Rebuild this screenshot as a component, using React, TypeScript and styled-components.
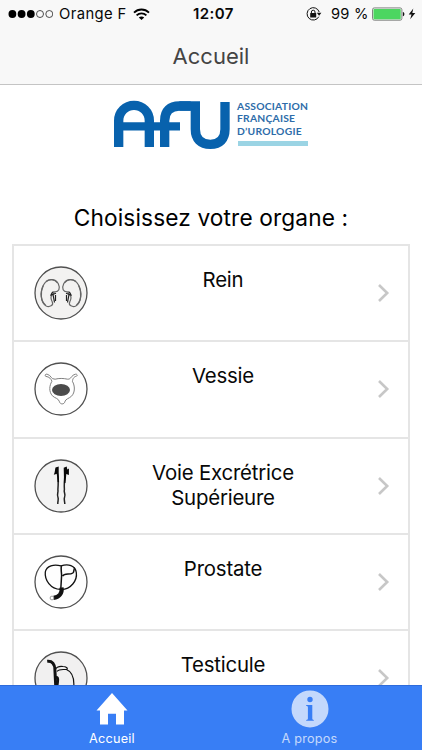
import React from "react";
import styled, { createGlobalStyle } from "styled-components";

const GlobalStyle = createGlobalStyle`
  * { box-sizing: border-box; }
  body { margin: 0; background: #fff; overflow: hidden; }
  svg { display: block; flex: none; }
`;

const Screen = styled.div`
  width: 422px;
  height: 750px;
  display: flex;
  flex-direction: column;
  overflow: hidden;
  background: #fff;
  color: #080808;
  font-family: Inter, "Liberation Sans", sans-serif;
`;

const Header = styled.header`
  flex: none;
  height: 85px;
  background: #f8f8f8;
  border-bottom: 1px solid #c4c4c4;
`;

const StatusBar = styled.div`
  height: 28px;
  display: grid;
  grid-template-columns: 193px 1fr 116px;
  align-items: center;
  line-height: 28px;
  font-size: 15px;
  white-space: nowrap;
`;

const Carrier = styled.div`
  display: flex;
  align-items: center;
  padding-left: 8px;
`;

const CarrierName = styled.span`
  width: 80px;
  padding-left: 6px;
  font-size: 14.8px;
  letter-spacing: 0.4px;
`;

const Clock = styled.div`
  font-weight: 600;
  font-size: 15px;
  letter-spacing: 0.45px;
`;

const Power = styled.div`
  display: flex;
  align-items: center;
`;

const Percent = styled.span`
  width: 41px;
  margin-left: 9px;
  font-size: 14.7px;
  letter-spacing: 0.2px;
`;

const Title = styled.h1`
  margin: 0;
  height: 56px;
  line-height: 56px;
  text-align: center;
  font-size: 22px;
  font-weight: 400;
  letter-spacing: 0;
  color: #444;
`;

const Content = styled.main`
  flex: 1;
  min-height: 0;
  overflow: hidden;
  display: flex;
  flex-direction: column;
`;

const Brand = styled.div`
  flex: none;
  display: flex;
  height: 117px;
  padding: 15px 0 0 113px;
`;

const BrandText = styled.div`
  margin-left: 7px;
  font-family: Lato, sans-serif;
  font-weight: 700;
  color: #2d6ca9;
  white-space: nowrap;
`;

const BrandLine = styled.div`
  height: 12.4px;
  line-height: 12px;
  font-size: 10.3px;
  letter-spacing: 0.24px;
`;

const BrandRule = styled.div`
  width: 70px;
  height: 5px;
  margin: 4px 0 0 1px;
  background: #9bd4e4;
`;

const Heading = styled.h2`
  flex: none;
  margin: 0;
  height: 42px;
  line-height: 32px;
  text-align: center;
  font-size: 22.7px;
  font-weight: 400;
  letter-spacing: 0.12px;
  color: #000;
`;

const List = styled.div`
  flex: none;
  width: 398px;
  margin-left: 12px;
  border: 2px solid #e5e5e5;
`;

const Row = styled.div`
  height: 96.3px;
  display: grid;
  grid-template-columns: 20px 54px 270px 1fr;
  border-bottom: 2px solid #e5e5e5;
`;

const Badge = styled.div`
  grid-column: 2;
  padding-top: 20px;
`;

const Label = styled.div`
  padding: 21px 30px 0;
  text-align: center;
  font-size: 20.4px;
  line-height: 25px;
  letter-spacing: -0.2px;
`;

const Chevron = styled.div`
  padding: 37px 0 0 19px;
`;

const TabBar = styled.nav`
  flex: none;
  height: 65px;
  display: grid;
  grid-template-columns: 224px 171px;
  background: #387ef5;
  border-top: 1px solid #2e6bdb;
`;

const Tab = styled.div<{ $active?: boolean }>`
  display: flex;
  flex-direction: column;
  align-items: center;
  color: #fff;
  opacity: ${(p) => (p.$active ? 1 : 0.7)};
  padding-top: 4px;
`;

const TabLabel = styled.span`
  margin-top: 1px;
  font-size: 12.7px;
  line-height: 20px;
  letter-spacing: 0.22px;
`;

const SignalDots = () => (
  <svg width="45" height="10" viewBox="0 0 45 10">
    {[4.4, 13.6, 22.8].map((x) => (
      <circle key={x} cx={x} cy="5" r="3.9" fill="#000" />
    ))}
    {[32, 41.3].map((x) => (
      <circle key={x} cx={x} cy="5" r="3.5" fill="none" stroke="#222" strokeWidth=".8" />
    ))}
  </svg>
);

const Wifi = () => (
  <svg width="17" height="13" viewBox="0 0 17 13" fill="none" stroke="#000" strokeWidth="1.8">
    <path d="M1 4.7C5.2.4 11.8.4 16 4.7M3.6 7.4c2.8-2.8 7-2.8 9.8 0" />
    <path d="M8.5 12.1 5.8 9.5c1.5-1.4 3.9-1.4 5.4 0z" fill="#000" stroke="none" />
  </svg>
);

const RotationLock = () => (
  <svg width="16" height="14" viewBox="0 0 16 14">
    <path d="M12.8 9.7A6.2 6.2 0 1 1 13.2 5" fill="none" stroke="#111" strokeWidth="1" />
    <path d="M10.8 5.7h4.6l-2.3 3z" fill="#111" />
    <rect x="4.2" y="6.1" width="6" height="4.3" rx=".5" fill="#111" />
    <path d="M5.4 6.3V5a1.8 1.8 0 0 1 3.6 0v1.3" fill="none" stroke="#111" strokeWidth="1" />
  </svg>
);

const Battery = () => (
  <svg width="45" height="14" viewBox="0 0 45 14">
    <rect x=".5" y=".9" width="29.4" height="12.3" rx="1.8" fill="#e8f5e9" stroke="#777" strokeWidth=".9" />
    <rect x="1.5" y="1.9" width="27.2" height="10.3" rx=".8" fill="#4cd660" />
    <path d="M30.9 5c2 .5 2 3.700 0 4.200z" fill="#111" />
    <path d="M41.300 1.500 36.700 7.600h2.800l-1.300 4.700 5.100-6.300h-3z" fill="#111" />
  </svg>
);

const AfuLogo = () => (
  <svg width="117" height="52" viewBox="24 30 351 156" fill="none" stroke="#0862ad" strokeWidth="28">
    <path d="M41 171V92a46 46 0 0 1 92 0v79" />
    <path d="M41 109H225" strokeWidth="25" />
    <path d="M179 171V92c0-30 16-44 44-44h34" />
    <path d="M223 48h48v70c0 29 16 45 45 45s44-16 44-45V36" />
  </svg>
);

const Kidneys = () => (
  <g fill="none">
    {["", "translate(54 0) scale(-1 1)"].map((t) => (
      <g key={t} transform={t}>
        <path
          d="M20 25.800c5 .7 6.500-3.500 4.300-8C21.500 12.500 13.600 12 9.800 18.500C5.500 26 6.500 36.500 12.200 40c3 1.500 8-.5 6-4.300-1.200-2.300-1.900-4.500-.4-6.600 1-1.300 2.500-1.400 2.200-3.300"
          stroke="#666"
          strokeWidth="1.200"
        />
        <path d="M9.300 19.400C5.800 26.500 7 35.800 11.500 39M12 15.500c3.600-3 9-2.300 11.500 1.500" stroke="#666" strokeWidth="1.200" />
        <path d="M19.500 25.500c-1.500.8-2 1.900-2.500 3.500l5-1.800M19 28.500l1.500 8M21.500 29v6" stroke="#222" strokeWidth="1.200" />
      </g>
    ))}
  </g>
);

const Bladder = () => (
  <g>
    <path
      d="M11.600 14.300c-1-1.300 0-2.500 1.500-2.100 4.500 1 3.400 5.300 8 5 4-1 8-1 12.500 0 4 .2 3.200-4 8-5 1.500-.3 2.200 1.300.9 2-3.500.8-3.700 3.300-4.100 5.100 2.600 4.400 2.900 11.200-1 15-2.600 2.400-5.600 2.300-6.600 5.500-.5 2.800-4.700 2.800-5.300 0-.9-3.600-5-3.700-7.100-6-3.800-4.300-3-10.300-.5-14.500-.5-2-2.500-4.600-6.300-5z"
      fill="#fff"
      stroke="#808080"
      strokeWidth="1"
    />
    <ellipse cx="27" cy="28" rx="9" ry="5.900" fill="#4b4b4b" />
  </g>
);

const Ureters = () => (
  <g>
    <path d="M23.400 14.500c1.200 6 .9 11 .5 16 .7 3-1.300 5 0 7.500 1 2.400-.3 4-.1 7" fill="none" stroke="#222" strokeWidth="1.500" />
    <path d="M31.200 14.500c-.8 6-1.200 11-.8 16-1 3 1.600 5 .2 7.500-1 2.500.2 4 .2 7" fill="none" stroke="#222" strokeWidth="1.500" />
    <path d="m21.500 8.500 3.200-1v6.700l.4 9-1.500-.3-.5-8.200-3.300 1.100c1.600-3.300.9-5 1.700-7.300z" fill="#080808" />
    <path d="m29.700 8.800 3-1.300.6 3 1.600-1v6.500l-2.600-1-.8 9-1.400.2z" fill="#080808" />
  </g>
);

const Prostate = () => (
  <g fill="none" stroke="#111">
    <path d="M27 10.800c-7-1.600-14.600-.4-15.700 6.200C10.500 25 16.500 34.200 26.500 34.400 37 35 43.500 25 42.300 17.500 41.300 10 34 8.800 27 10.800z" strokeWidth="1.300" />
    <path d="M27.400 11c-.8 3 .1 5 .2 9.500L26.800 34" strokeWidth="1.500" />
    <path d="M28.500 21.200c2-3.800 7-.8 10.300-3.200 1.700-1.400.6-3.600 2-5.300" strokeWidth="1.500" />
    <path d="M27.500 32.500c1 6-2.600 9.800-8 10.300" strokeWidth="4.200" />
    <circle cx="18" cy="43" r="1.900" fill="#fff" stroke="#777" strokeWidth=".7" />
  </g>
);

const Testicle = () => (
  <g fill="none" stroke="#111">
    <path d="M13.200 10.300c5-.6 7.700 2.800 7.700 8.300l.8 16" strokeWidth="3" />
    <path d="M20.500 19c2-3 5-4 8.500-3.500 3 .2 5 1.300 4 2.800-2.500.8-7.500-1-10 2.200" strokeWidth="1.200" />
    <path d="M32 18.200c5 2 8.300 8 7.800 17" strokeWidth="1.200" />
    <path d="M21 27c4-3 3 3 2 9" strokeWidth="2.500" />
  </g>
);

const rows = [
  { label: "Rein", fill: "#f3f2f1", Art: Kidneys },
  { label: "Vessie", fill: "#fefefe", Art: Bladder },
  { label: "Voie Excrétrice Supérieure", fill: "#f3f3f3", Art: Ureters },
  { label: "Prostate", fill: "#fefefe", Art: Prostate },
  { label: "Testicule", fill: "#f1f0f0", Art: Testicle },
];

export default function App() {
  return (
    <Screen>
      <GlobalStyle />
      <Header>
        <StatusBar>
          <Carrier>
            <SignalDots />
            <CarrierName>Orange F</CarrierName>
            <Wifi />
          </Carrier>
          <Clock>12:07</Clock>
          <Power>
            <RotationLock />
            <Percent>99 %</Percent>
            <Battery />
          </Power>
        </StatusBar>
        <Title>Accueil</Title>
      </Header>
      <Content>
        <Brand>
          <AfuLogo />
          <BrandText>
            <BrandLine>ASSOCIATION</BrandLine>
            <BrandLine>FRANÇAISE</BrandLine>
            <BrandLine>D’UROLOGIE</BrandLine>
            <BrandRule />
          </BrandText>
        </Brand>
        <Heading>Choisissez votre organe :</Heading>
        <List>
          {rows.map(({ label, fill, Art }) => (
            <Row key={label}>
              <Badge>
                <svg width="54" height="54" viewBox="0 0 54 54">
                  <circle cx="27" cy="27" r="26" fill={fill} stroke="#505050" strokeWidth="1.300" />
                  <Art />
                </svg>
              </Badge>
              <Label>{label}</Label>
              <Chevron>
                <svg width="13" height="20" viewBox="0 0 13 20">
                  <path d="m2 2 8.200 8L2 18" fill="none" stroke="#c7c7c7" strokeWidth="2.600" />
                </svg>
              </Chevron>
            </Row>
          ))}
        </List>
      </Content>
      <TabBar>
        <Tab $active>
          <svg width="38" height="38" viewBox="0 0 38 38">
            <path d="M19 3 34.500 20.500H31V34.600h-8V23.700h-8v10.900H7V20.500H3.500z" fill="#fff" />
          </svg>
          <TabLabel>Accueil</TabLabel>
        </Tab>
        <Tab>
          <svg width="38" height="38" viewBox="0 0 38 38">
            <path
              fillRule="evenodd"
              fill="#fff"
              d="M19 .4a18.500 18.500 0 1 0 0 37 18.500 18.500 0 0 0 0-37zM19 6.800a2.700 2.700 0 1 1 0 5.400 2.700 2.700 0 0 1 0-5.400zM15.200 15h6.100v13.500c0 1 .6 1.300 1.500 1.400v.8h-7.600v-.8c1.100-.1 1.700-.4 1.700-1.400V17.300c0-1-.5-1.300-1.700-1.400z"
            />
          </svg>
          <TabLabel>A propos</TabLabel>
        </Tab>
      </TabBar>
    </Screen>
  );
}
